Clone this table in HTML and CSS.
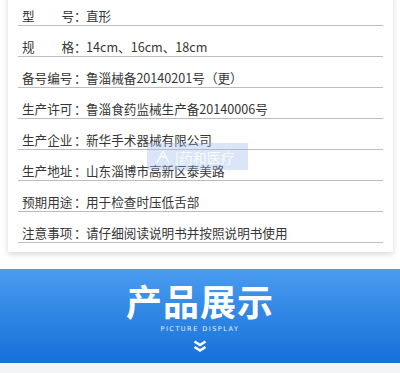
FILE: index.html
```html
<!DOCTYPE html>
<html lang="zh">
<head>
<meta charset="utf-8">
<link rel="stylesheet" href="styles.css">
</head>
<body>
<div class="card">
  <div class="row"><span class="label spaced"><span>型</span><span>号</span></span><span class="colon">：</span><span class="val">直形</span></div>
  <div class="row"><span class="label spaced"><span>规</span><span>格</span></span><span class="colon">：</span><span class="val">14cm、16cm、18cm</span></div>
  <div class="row"><span class="label">备号编号</span><span class="colon">：</span><span class="val">鲁淄械备20140201号（更）</span></div>
  <div class="row"><span class="label">生产许可</span><span class="colon">：</span><span class="val">鲁淄食药监械生产备20140006号</span></div>
  <div class="row"><span class="label">生产企业</span><span class="colon">：</span><span class="val">新华手术器械有限公司</span></div>
  <div class="row"><span class="label">生产地址</span><span class="colon">：</span><span class="val">山东淄博市高新区泰美路</span></div>
  <div class="row"><span class="label">预期用途</span><span class="colon">：</span><span class="val">用于检查时压低舌部</span></div>
  <div class="row"><span class="label">注意事项</span><span class="colon">：</span><span class="val">请仔细阅读说明书并按照说明书使用</span></div>
  <div class="watermark">
    <svg width="16" height="14" viewBox="0 0 16 14"><path d="M8 1 L2 13 M8 1 L14 13 M5 8 Q8 5 11 8" stroke="#ffffff" stroke-width="1.2" fill="none"/></svg>
    <span>|药和医疗</span>
  </div>
</div>
<div class="banner">
  <div class="title">产品展示</div>
  <div class="sub">PICTURE DISPLAY</div>
  <svg class="chev" width="14" height="13" viewBox="0 0 14 13"><path d="M1.5 1.5 L7 5 L12.5 1.5 M1.5 7 L7 10.5 L12.5 7" stroke="#ffffff" stroke-width="2.6" fill="none" stroke-linejoin="miter"/></svg>
</div>
<div class="foot"></div>
</body>
</html>
```
FILE: styles.css
```css
html, body {
  margin: 0;
  padding: 0;
  background: #ffffff;
  font-family: "Noto Sans CJK SC", "Noto Sans", sans-serif;
}
body {
  width: 400px;
  height: 373px;
  overflow: hidden;
}
.card {
  position: relative;
  margin: -5px 7px 0 8px;
  padding: 0 10px 9px 10px;
  background: #fff;
  box-shadow: 0 2px 6px rgba(0,0,0,0.16);
}
.row {
  display: flex;
  align-items: center;
  height: 18px;
  padding: 12px 0 0 4px;
  border-bottom: 1px solid #bdbdbd;
  font-size: 12.6px;
  line-height: 18px;
  color: #363636;
  white-space: nowrap;
}
.label {
  width: 52px;
  display: inline-block;
}
.spaced {
  display: flex;
  justify-content: space-between;
  width: 52px;
}
.colon {
  width: 12px;
}
.watermark {
  position: absolute;
  left: 139px;
  top: 148px;
  width: 101px;
  height: 27px;
  background: rgba(150, 180, 235, 0.35);
  display: flex;
  align-items: center;
  gap: 4px;
  padding-left: 8px;
  box-sizing: border-box;
  color: rgba(255,255,255,0.85);
  font-size: 14px;
}
.banner {
  margin-top: 17px;
  height: 94px;
  background: linear-gradient(#4a9cf0, #1670d8);
  display: flex;
  flex-direction: column;
  align-items: center;
}
.title {
  margin-top: 12px;
  font-size: 36px;
  line-height: 38px;
  font-weight: 700;
  color: #fff;
  letter-spacing: 1px;
}
.sub {
  margin-top: 6px;
  font-family: "DejaVu Sans", sans-serif;
  font-size: 6.5px;
  letter-spacing: 1.5px;
  color: #e6f0ff;
  line-height: 8px;
}
.chev {
  margin-top: 7px;
}
.foot {
  height: 20px;
  background: #f2f4f6;
}
```
